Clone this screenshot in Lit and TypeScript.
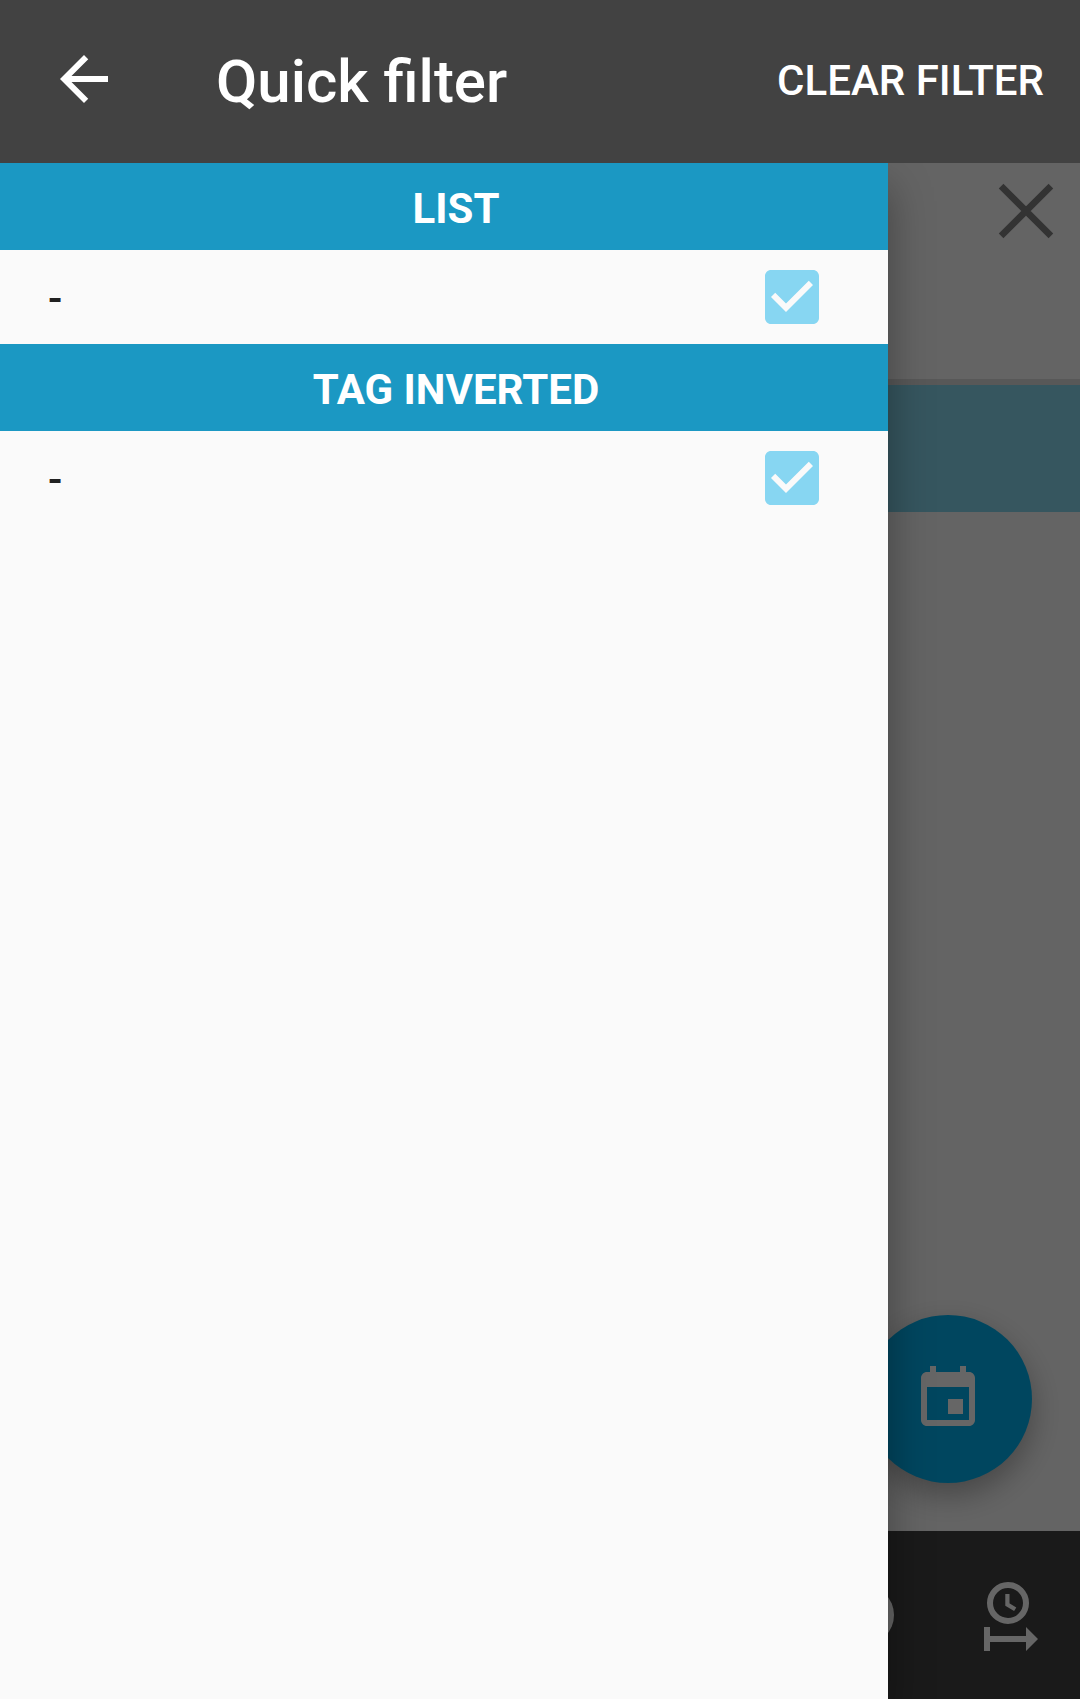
import { LitElement, html, css, svg } from "lit";
import { customElement, state } from "lit/decorators.js";

interface FilterGroup {
  title: string;
  option: string;
  checked: boolean;
}

@customElement("app-root")
export class AppRoot extends LitElement {
  static styles = css`
    :host {
      display: flex;
      flex-direction: column;
      min-height: 100vh;
      font-family: Roboto, "Noto Sans", sans-serif;
      background: #fafafa;
    }
    *,
    *::before {
      box-sizing: border-box;
    }
    button {
      display: grid;
      place-items: center;
      margin: 0;
      padding: 0;
      border: 0;
      background: none;
      color: inherit;
      font: inherit;
      cursor: pointer;
    }
    svg {
      display: block;
      width: 72px;
      height: 72px;
      fill: currentColor;
    }
    .toolbar {
      display: flex;
      align-items: center;
      padding: 0 36px 0 48px;
      height: 163px;
      background: #424242;
      color: #fff;
    }
    .back {
      padding-bottom: 6px;
    }
    .title {
      flex: 1;
      margin: 0 0 0 96px;
      font-size: 60px;
      font-weight: 500;
      line-height: 72px;
    }
    .clear {
      padding-bottom: 2px;
      font-size: 42px;
      font-weight: 500;
      line-height: 48px;
      text-transform: uppercase;
    }
    .stage {
      flex: 1;
      display: grid;
      overflow: hidden;
    }
    .page,
    .scrim,
    .drawer {
      grid-area: 1 / 1;
    }
    .page {
      display: flex;
      flex-direction: column;
      background: #fafafa;
    }
    .panel {
      display: flex;
      justify-content: flex-end;
      align-items: flex-start;
      height: 222px;
      border-bottom: 6px solid #dcdcdc;
      color: #808080;
    }
    .close {
      width: 108px;
      height: 96px;
    }
    .selected {
      height: 127px;
      background: #87d6ee;
    }
    .content {
      flex: 1;
      display: flex;
      justify-content: flex-end;
      align-items: flex-end;
      padding: 48px;
    }
    .fab {
      width: 168px;
      height: 168px;
      border-radius: 50%;
      background: #00b0ee;
      color: #fff;
      box-shadow: 0 12px 30px rgba(0, 0, 0, 0.3);
    }
    .bottom {
      display: flex;
      justify-content: flex-end;
      height: 168px;
      background: #424242;
      color: #fff;
    }
    .tab {
      width: 144px;
    }
    .scrim {
      background: rgba(0, 0, 0, 0.6);
      z-index: 1;
    }
    .drawer {
      z-index: 2;
      margin-right: 192px;
      background: #fafafa;
      color: #212121;
      box-shadow: 0 24px 40px rgba(0, 0, 0, 0.35);
    }
    .heading {
      margin: 0;
      padding: 22px 0 17px 24px;
      background: #1b98c3;
      color: #fff;
      font-size: 42px;
      font-weight: 700;
      line-height: 48px;
      text-align: center;
      text-transform: uppercase;
    }
    .row {
      display: flex;
      align-items: center;
      justify-content: space-between;
      height: 94px;
      padding: 0 60px 0 48px;
      font-size: 42px;
      line-height: 48px;
      cursor: pointer;
    }
    .option {
      padding-top: 4px;
      font-weight: 500;
    }
    .check {
      display: grid;
      place-items: center;
      color: #87d6f2;
    }
    .check > * {
      grid-area: 1 / 1;
    }
    .box {
      appearance: none;
      width: 54px;
      height: 54px;
      margin: 0;
      border: 6px solid #757575;
      border-radius: 6px;
    }
    .box:checked {
      border-color: transparent;
    }
    .mark {
      visibility: hidden;
      pointer-events: none;
    }
    .box:checked + .mark {
      visibility: visible;
    }
  `;

  @state() private groups: FilterGroup[] = [
    { title: "List", option: "-", checked: true },
    { title: "Tag inverted", option: "-", checked: true },
  ];

  private icon(content: unknown, cls = "") {
    return html`<svg class=${cls} viewBox="0 0 24 24" aria-hidden="true">${content}</svg>`;
  }

  private toggle(index: number) {
    this.groups = this.groups.map((g, i) => (i === index ? { ...g, checked: !g.checked } : g));
  }

  private clear() {
    this.groups = this.groups.map((g) => ({ ...g, checked: true }));
  }

  render() {
    return html`
      <header class="toolbar">
        <button class="back" aria-label="Back">
          ${this.icon(svg`<path d="M20 11H7.83l5.59-5.59L12 4l-8 8 8 8 1.41-1.41L7.83 13H20v-2z"/>`)}
        </button>
        <h1 class="title">Quick filter</h1>
        <button class="clear" @click=${this.clear}>Clear filter</button>
      </header>
      <div class="stage">
        <main class="page">
          <div class="panel">
            <button class="close" aria-label="Close">
              ${this.icon(svg`<path d="M3.7 3.7l16.6 16.6M20.3 3.7L3.7 20.3" fill="none" stroke="currentColor" stroke-width="2.2"/>`)}
            </button>
          </div>
          <div class="selected"></div>
          <div class="content">
            <button class="fab" aria-label="Add event">
              ${this.icon(svg`<path d="M17 12h-5v5h5v-5zM16 1v2H8V1H6v2H5c-1.11 0-1.99.9-1.99 2L3 19c0 1.1.89 2 2 2h14c1.1 0 2-.9 2-2V5c0-1.1-.9-2-2-2h-1V1h-2zm3 18H5V8h14v11z"/>`)}
            </button>
          </div>
          <nav class="bottom">
            <button class="tab" aria-label="Now">
              ${this.icon(svg`<circle cx="12" cy="12" r="10"/>`)}
            </button>
            <button class="tab" aria-label="Time range">
              ${this.icon(svg`
                <circle cx="12" cy="8" r="6" fill="none" stroke="currentColor" stroke-width="2"/>
                <path d="M11.8 5v3.5l2.6 1.6" fill="none" stroke="currentColor" stroke-width="1.4"/>
                <path d="M4 16h2v3h12v-3l4 4-4 4v-3H6v3H4z"/>`)}
            </button>
          </nav>
        </main>
        <div class="scrim"></div>
        <aside class="drawer">
          ${this.groups.map(
            (group, i) => html`
              <section>
                <h2 class="heading">${group.title}</h2>
                <label class="row">
                  <span class="option">${group.option}</span>
                  <span class="check">
                    <input
                      class="box"
                      type="checkbox"
                      .checked=${group.checked}
                      @change=${() => this.toggle(i)}
                    />
                    ${this.icon(
                      svg`<path d="M19 3H5c-1.11 0-2 .9-2 2v14c0 1.1.89 2 2 2h14c1.11 0 2-.9 2-2V5c0-1.1-.89-2-2-2zm-9 14l-5-5 1.41-1.41L10 14.17l7.59-7.59L19 8l-9 9z"/>`,
                      "mark",
                    )}
                  </span>
                </label>
              </section>
            `,
          )}
        </aside>
      </div>
    `;
  }
}
